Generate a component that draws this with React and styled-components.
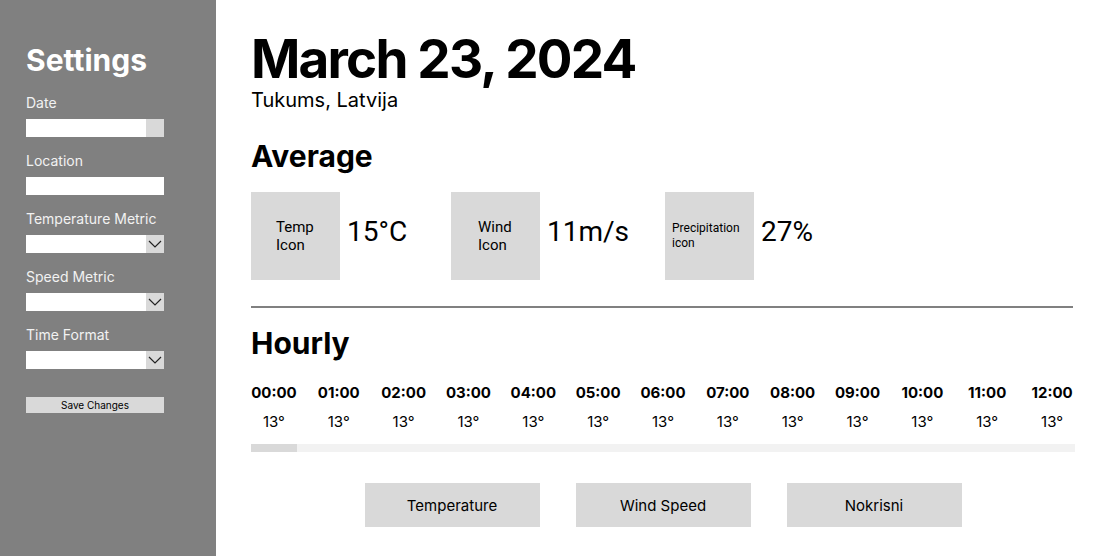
import React from "react";
import styled, { createGlobalStyle } from "styled-components";

const Global = createGlobalStyle`
  html, body { margin: 0; padding: 0; background: #fff; }
  body { font-family: Inter, "Noto Sans", sans-serif; color: #000; }
  * { box-sizing: border-box; }
`;

const Page = styled.div`
  display: flex;
  width: 1117px;
  height: 556px;
  overflow: hidden;
`;

const Sidebar = styled.aside`
  width: 216px;
  flex: none;
  background: #808080;
  padding: 42px 52px 0 26px;
  display: flex;
  flex-direction: column;
`;

const SideTitle = styled.h1`
  margin: 0 0 16px;
  font-size: 30px;
  line-height: 36px;
  font-weight: 700;
  color: #fff;
`;

const Field = styled.div`
  display: flex;
  flex-direction: column;
  margin-bottom: 15px;
`;

const Label = styled.label`
  font-size: 14px;
  line-height: 17px;
  color: #f2f2f2;
  margin-bottom: 8px;
`;

const InputBox = styled.div`
  display: flex;
  height: 18px;
  background: #fff;
`;

const InputFill = styled.div`
  flex: 1;
`;

const SideBtn = styled.div`
  width: 18px;
  height: 18px;
  background: #d9d9d9;
  display: flex;
  align-items: center;
  justify-content: center;
`;

const SaveButton = styled.button`
  margin-top: 13px;
  height: 16px;
  border: none;
  padding: 0;
  background: #d9d9d9;
  font-family: Inter, sans-serif;
  font-size: 10px;
  color: #000;
`;

const Main = styled.main`
  flex: 1;
  padding: 33px 42px 0 35px;
  display: flex;
  flex-direction: column;
  min-width: 0;
`;

const Title = styled.h1`
  margin: 0;
  font-size: 53px;
  line-height: 53px;
  letter-spacing: -1.8px;
  font-weight: 700;
`;

const Subtitle = styled.div`
  margin-top: 2px;
  font-size: 20px;
  line-height: 24px;
`;

const SectionTitle = styled.h2`
  margin: ${(p) => p.$mt || 0}px 0 0;
  font-size: 30px;
  line-height: 36px;
  font-weight: 700;
`;

const Stats = styled.div`
  display: flex;
  gap: 36px;
  margin-top: 18px;
`;

const Stat = styled.div`
  display: flex;
  align-items: center;
  gap: 7px;
`;

const IconBox = styled.div`
  width: 89px;
  height: 88px;
  background: #d9d9d9;
  display: flex;
  align-items: center;
  padding-left: ${(p) => p.$pl}px;
  font-family: Roboto, sans-serif;
  font-size: ${(p) => p.$fs}px;
  line-height: ${(p) => p.$fs + 3}px;
`;

const StatValue = styled.div`
  font-family: Roboto, sans-serif;
  font-size: 28px;
  line-height: 34px;
  margin-bottom: 9px;
  min-width: ${(p) => p.$minW || 0}px;
`;

const Divider = styled.hr`
  margin: 26px 0 0;
  border: none;
  height: 2px;
  background: #808080;
  width: 822px;
`;

const Hours = styled.div`
  display: flex;
  gap: 19px;
  margin-top: 23px;
`;

const Hour = styled.div`
  display: flex;
  flex-direction: column;
  align-items: center;
  width: 46px;
`;

const HourTime = styled.div`
  font-size: 15px;
  line-height: 18px;
  font-weight: 700;
`;

const HourTemp = styled.div`
  margin-top: 11px;
  font-size: 15px;
  line-height: 18px;
`;

const Track = styled.div`
  margin-top: 13px;
  height: 8px;
  background: #f2f2f2;
  width: 824px;
`;

const Thumb = styled.div`
  height: 8px;
  width: 46px;
  background: #d9d9d9;
`;

const Tabs = styled.div`
  display: flex;
  justify-content: center;
  gap: 36px;
  margin-top: 31px;
  width: 824px;
`;

const Tab = styled.button`
  width: 175px;
  height: 44px;
  border: none;
  background: #d9d9d9;
  font-family: Inter, sans-serif;
  font-size: 15px;
  color: #000;
`;

const Chevron = () => (
  <svg width="14" height="8" viewBox="0 0 14 8">
    <path d="M1 1 L7 7 L13 1" fill="none" stroke="#222" strokeWidth="1.2" />
  </svg>
);

const fields = [
  { label: "Date", kind: "date" },
  { label: "Location", kind: "text" },
  { label: "Temperature Metric", kind: "select" },
  { label: "Speed Metric", kind: "select" },
  { label: "Time Format", kind: "select" },
];

const hours = Array.from({ length: 13 }, (_, i) => `${String(i).padStart(2, "0")}:00`);

export default function App() {
  return (
    <>
      <Global />
      <Page>
        <Sidebar>
          <SideTitle>Settings</SideTitle>
          {fields.map((f) => (
            <Field key={f.label}>
              <Label>{f.label}</Label>
              <InputBox>
                <InputFill />
                {f.kind === "date" && <SideBtn />}
                {f.kind === "select" && (
                  <SideBtn>
                    <Chevron />
                  </SideBtn>
                )}
              </InputBox>
            </Field>
          ))}
          <SaveButton>Save Changes</SaveButton>
        </Sidebar>
        <Main>
          <Title>March 23, 2024</Title>
          <Subtitle>Tukums, Latvija</Subtitle>
          <SectionTitle $mt={26}>Average</SectionTitle>
          <Stats>
            <Stat>
              <IconBox $pl={25} $fs={15}>Temp<br />Icon</IconBox>
              <StatValue $minW={68}>15°C</StatValue>
            </Stat>
            <Stat>
              <IconBox $pl={27} $fs={15}>Wind<br />Icon</IconBox>
              <StatValue>11m/s</StatValue>
            </Stat>
            <Stat>
              <IconBox $pl={7} $fs={12}>Precipitation<br />icon</IconBox>
              <StatValue>27%</StatValue>
            </Stat>
          </Stats>
          <Divider />
          <SectionTitle $mt={17}>Hourly</SectionTitle>
          <Hours>
            {hours.map((h) => (
              <Hour key={h}>
                <HourTime>{h}</HourTime>
                <HourTemp>13°</HourTemp>
              </Hour>
            ))}
          </Hours>
          <Track>
            <Thumb />
          </Track>
          <Tabs>
            <Tab>Temperature</Tab>
            <Tab>Wind Speed</Tab>
            <Tab>Nokrisni</Tab>
          </Tabs>
        </Main>
      </Page>
    </>
  );
}
